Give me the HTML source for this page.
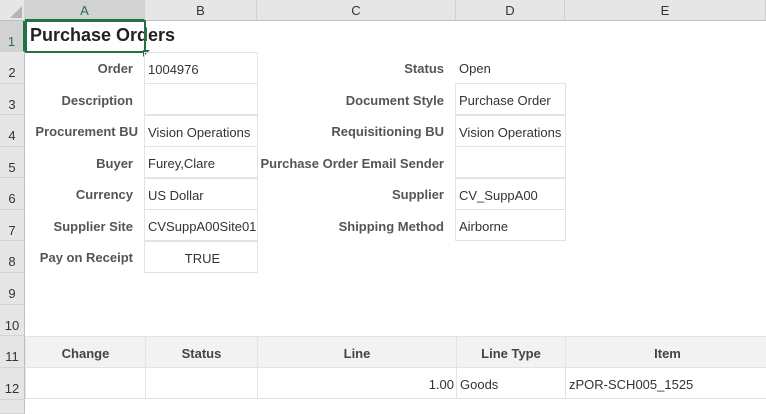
<!DOCTYPE html>
<html><head><style>
body{margin:0;width:766px;height:403px;overflow:hidden;background:#fff;font-family:"Liberation Sans",sans-serif;position:relative}
.a{position:absolute;box-sizing:border-box}
.ch{top:0;height:21px;background:#e6e6e6;border-right:1px solid #cfcfcf;border-bottom:1px solid #bfbfbf;text-align:center;font-size:13px;line-height:21px;color:#333}
.rh{left:0;width:25px;background:#e6e6e6;border-right:1px solid #bfbfbf;border-bottom:1px solid #d4d4d4;font-size:13px;color:#333;text-align:center;padding-top:13px}
.l{font-size:13px;font-weight:bold;color:#555;text-align:right;height:32px;line-height:34px}
.v{font-size:13px;color:#333;height:32px;line-height:34px;padding-left:3px;white-space:nowrap}
.bx{border:1px solid #e3e3e3}
.h{background:#f2f2f2;border:1px solid #e3e3e3;font-size:13px;font-weight:bold;color:#444;text-align:center;line-height:34px;height:32px}
</style></head><body>
<div class="a ch" style="left:0;width:25px;background:#e6e6e6"></div>
<svg class="a" style="left:10px;top:6px" width="13" height="13"><polygon points="12,0 12,12 0,12" fill="#b4b4b4"/></svg>
<div class="a ch" style="left:25px;width:120px;background:#d2d2d2;color:#217346;border-bottom:2px solid #217346">A</div>
<div class="a ch" style="left:145px;width:112px">B</div>
<div class="a ch" style="left:257px;width:199px">C</div>
<div class="a ch" style="left:456px;width:109px">D</div>
<div class="a ch" style="left:565px;width:201px">E</div>

<div class="a rh" style="top:21px;height:31px;background:#d2d2d2;color:#217346;border-right:2px solid #217346">1</div>
<div class="a rh" style="top:52px;height:32px">2</div>
<div class="a rh" style="top:84px;height:31px">3</div>
<div class="a rh" style="top:115px;height:32px">4</div>
<div class="a rh" style="top:147px;height:31px">5</div>
<div class="a rh" style="top:178px;height:32px">6</div>
<div class="a rh" style="top:210px;height:31px">7</div>
<div class="a rh" style="top:241px;height:32px">8</div>
<div class="a rh" style="top:273px;height:32px">9</div>
<div class="a rh" style="top:305px;height:31px">10</div>
<div class="a rh" style="top:336px;height:32px">11</div>
<div class="a rh" style="top:368px;height:32px">12</div>
<div class="a rh" style="top:400px;height:10px"></div>

<div class="a" style="left:30px;top:22px;font-size:18px;font-weight:bold;color:#222;line-height:26px">Purchase Orders</div>
<div class="a" style="left:25px;top:20px;width:121px;height:33px;border:2px solid #217346"></div>
<svg class="a" style="left:143px;top:50px" width="8" height="8"><polygon points="0,0 7,0 0,7" fill="#217346"/></svg>

<div class="a l" style="left:25px;top:52px;width:108px">Order</div>
<div class="a l" style="left:25px;top:84px;width:108px">Description</div>
<div class="a l" style="left:25px;top:115px;width:113px">Procurement BU</div>
<div class="a l" style="left:25px;top:147px;width:108px">Buyer</div>
<div class="a l" style="left:25px;top:178px;width:108px">Currency</div>
<div class="a l" style="left:25px;top:210px;width:108px">Supplier Site</div>
<div class="a l" style="left:25px;top:241px;width:108px">Pay on Receipt</div>

<div class="a v bx" style="left:144px;top:52px;width:114px">1004976</div>
<div class="a v bx" style="left:144px;top:83px;width:114px"></div>
<div class="a v bx" style="left:144px;top:115px;width:114px">Vision Operations</div>
<div class="a v bx" style="left:144px;top:146px;width:114px">Furey,Clare</div>
<div class="a v bx" style="left:144px;top:178px;width:114px">US Dollar</div>
<div class="a v bx" style="left:144px;top:209px;width:114px">CVSuppA00Site01</div>
<div class="a v bx" style="left:144px;top:241px;width:114px;text-align:center">TRUE</div>

<div class="a l" style="left:257px;top:52px;width:187px">Status</div>
<div class="a l" style="left:257px;top:84px;width:187px">Document Style</div>
<div class="a l" style="left:257px;top:115px;width:187px">Requisitioning BU</div>
<div class="a l" style="left:257px;top:147px;width:187px">Purchase Order Email Sender</div>
<div class="a l" style="left:257px;top:178px;width:187px">Supplier</div>
<div class="a l" style="left:257px;top:210px;width:187px">Shipping Method</div>

<div class="a v" style="left:456px;top:52px;width:110px">Open</div>
<div class="a v bx" style="left:455px;top:83px;width:111px">Purchase Order</div>
<div class="a v bx" style="left:455px;top:115px;width:111px">Vision Operations</div>
<div class="a v bx" style="left:455px;top:146px;width:111px"></div>
<div class="a v bx" style="left:455px;top:178px;width:111px">CV_SuppA00</div>
<div class="a v bx" style="left:455px;top:209px;width:111px">Airborne</div>

<div class="a h" style="left:25px;top:336px;width:121px">Change</div>
<div class="a h" style="left:145px;top:336px;width:113px">Status</div>
<div class="a h" style="left:257px;top:336px;width:200px">Line</div>
<div class="a h" style="left:456px;top:336px;width:110px">Line Type</div>
<div class="a h" style="left:565px;top:336px;width:205px">Item</div>

<div class="a v bx" style="left:25px;top:367px;width:121px"></div>
<div class="a v bx" style="left:145px;top:367px;width:113px"></div>
<div class="a v bx" style="left:257px;top:367px;width:200px;text-align:right;padding-right:2px">1.00</div>
<div class="a v bx" style="left:456px;top:367px;width:110px">Goods</div>
<div class="a v bx" style="left:565px;top:367px;width:205px">zPOR-SCH005_1525</div>
</body></html>
